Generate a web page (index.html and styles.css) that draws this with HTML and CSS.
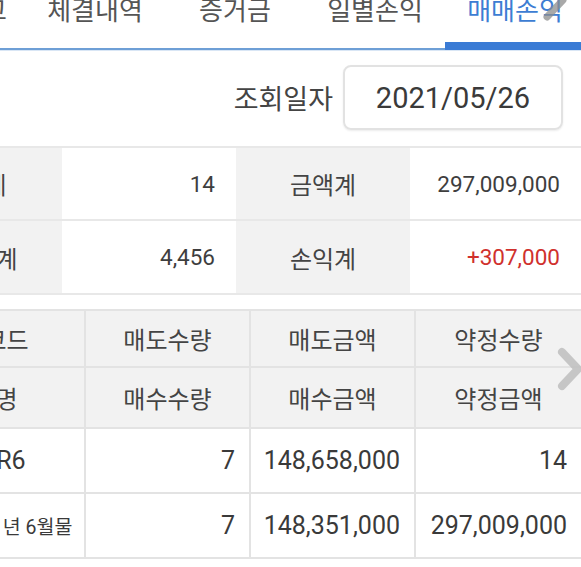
FILE: index.html
```html
<!DOCTYPE html>
<html lang="ko">
<head>
<meta charset="utf-8">
<title>매매손익</title>
<link rel="stylesheet" href="styles.css">
</head>
<body>
<div class="page">
  <nav class="tabs">
    <div class="tab first">계좌잔고</div>
    <div class="tab">체결내역</div>
    <div class="tab">증거금</div>
    <div class="tab">일별손익</div>
    <div class="tab active">매매손익</div>
    <svg class="more more-tabs" width="30" height="44" viewBox="0 0 30 44"><path d="M8 5 L24 22 L8 39" /></svg>
  </nav>

  <div class="query">
    <span class="query-label">조회일자</span>
    <div class="date-box">2021/05/26</div>
  </div>

  <div class="summary">
    <div class="s-label">수량계</div>
    <div class="s-value">14</div>
    <div class="s-label">금액계</div>
    <div class="s-value">297,009,000</div>
    <div class="s-label">수수료계</div>
    <div class="s-value">4,456</div>
    <div class="s-label">손익계</div>
    <div class="s-value plus">+307,000</div>
  </div>

  <div class="grid-wrap">
    <div class="grid">
      <div class="g-head">종목코드</div>
      <div class="g-head">매도수량</div>
      <div class="g-head">매도금액</div>
      <div class="g-head">약정수량</div>
      <div class="g-head">종목명</div>
      <div class="g-head">매수수량</div>
      <div class="g-head">매수금액</div>
      <div class="g-head">약정금액</div>
      <div class="g-cell code">101R6</div>
      <div class="g-cell num">7</div>
      <div class="g-cell num">148,658,000</div>
      <div class="g-cell num">14</div>
      <div class="g-cell name">2021년 6월물</div>
      <div class="g-cell num">7</div>
      <div class="g-cell num">148,351,000</div>
      <div class="g-cell num">297,009,000</div>
    </div>
    <svg class="more more-grid" width="30" height="44" viewBox="0 0 30 44"><path d="M8 5 L24 22 L8 39" /></svg>
  </div>
</div>
</body>
</html>
```

FILE: styles.css
```css
html, body {
  margin: 0;
  padding: 0;
  background: #ffffff;
  overflow: hidden;
}

body {
  font-family: Roboto, "Noto Sans CJK KR", sans-serif;
  color: #444444;
}

.page {
  width: 696px;
  margin: -20px 0 0 -115px;
}

/* tabs */
.tabs {
  position: relative;
  display: flex;
  height: 70px;
}

.tab {
  flex: 0 0 140px;
  box-sizing: border-box;
  height: 70px;
  padding-top: 17px;
  text-align: center;
  font-size: 26px;
  line-height: 28px;
  white-space: nowrap;
  color: #555555;
  border-bottom: 2px solid #6e9fd6;
  box-shadow: 0 1px 0 #d9e6f5;
}

.tab.first {
  text-align: right;
  padding-right: 18px;
}

.tab.active {
  color: #3d7dd3;
  border-bottom: 8px solid #3a7bd5;
}

.more {
  position: absolute;
  fill: none;
  stroke-linecap: round;
  stroke-linejoin: round;
  stroke-width: 7;
}

.more-tabs {
  right: 12px;
  top: -2px;
  stroke: rgba(140, 140, 140, 0.75);
}

/* query row */
.query {
  display: flex;
  justify-content: flex-end;
  align-items: center;
  gap: 10px;
  padding: 15px 18px 16px 0;
}

.query-label {
  font-size: 27px;
  color: #444444;
}

.date-box {
  box-sizing: border-box;
  width: 220px;
  height: 65px;
  border: 2px solid #e2e2e2;
  border-radius: 8px;
  box-shadow: 0 1px 2px rgba(0, 0, 0, 0.08);
  display: flex;
  align-items: center;
  justify-content: center;
  font-size: 29px;
  color: #3a3a3a;
}

/* summary */
.summary {
  display: grid;
  grid-template-columns: 177px 174px 174px 1fr;
  grid-template-rows: 71px 72px;
  row-gap: 2px;
  padding: 2px 0;
  background: #e8e8e8;
}

.s-label,
.s-value {
  display: flex;
  align-items: center;
}

.s-label {
  justify-content: center;
  background: #f2f2f2;
  font-size: 24px;
}

.s-value {
  justify-content: flex-end;
  padding-right: 21px;
  background: #ffffff;
  font-size: 22.5px;
  color: #3e3e3e;
}

.s-value.plus {
  color: #d0312d;
}

/* grid */
.grid-wrap {
  position: relative;
  margin-top: 14px;
}

.grid {
  display: grid;
  grid-template-columns: 199px 163px 163px 1fr;
  grid-template-rows: 55px 59px 63px 63px;
  gap: 2px;
  padding: 2px 0;
  background: #e3e3e3;
}

.g-head,
.g-cell {
  display: flex;
  align-items: center;
  white-space: nowrap;
  overflow: hidden;
}

.g-head {
  justify-content: center;
  background: #f2f2f2;
  font-size: 24px;
  color: #444444;
}

.g-cell {
  background: #ffffff;
  font-size: 25px;
  color: #3a3a3a;
}

.g-cell.num {
  justify-content: flex-end;
  padding-right: 14px;
}

.g-cell.code,
.g-cell.name {
  justify-content: flex-start;
}

.g-cell.code {
  padding-left: 69px;
}

.g-cell.name {
  padding-left: 74px;
  font-size: 19.5px;
}

.more-grid {
  right: -3px;
  top: 38px;
  stroke: rgba(190, 190, 190, 0.85);
  stroke-width: 8;
}
```
